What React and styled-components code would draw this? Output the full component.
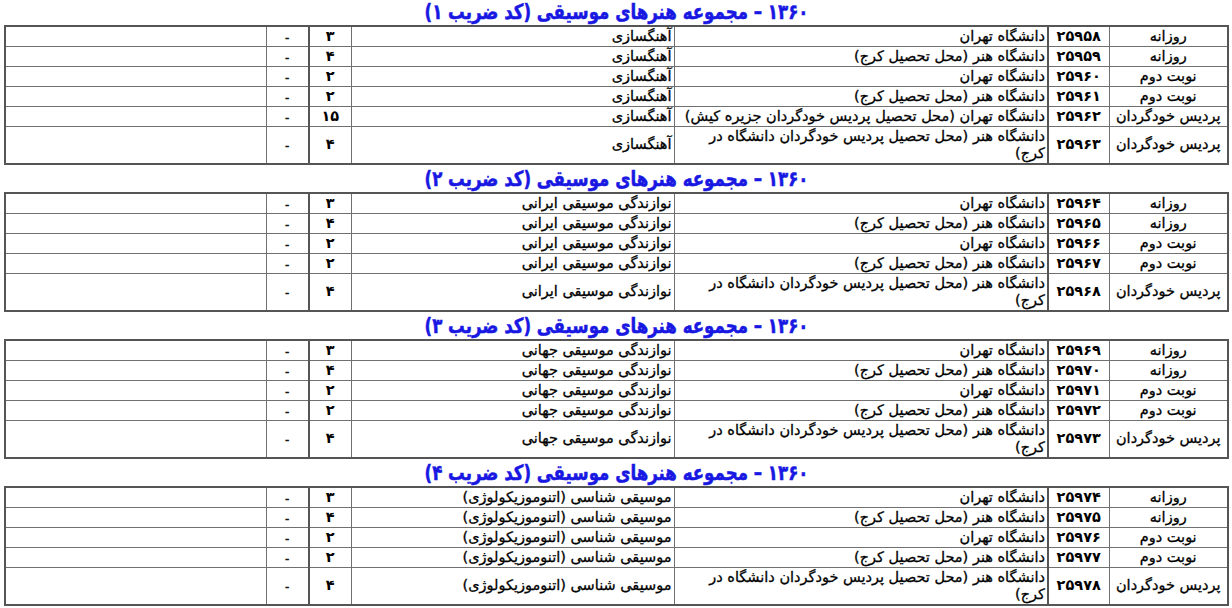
import React from "react";
import styled, { createGlobalStyle } from "styled-components";

const GlobalStyle = createGlobalStyle`
  html, body {
    margin: 0;
    padding: 0;
    background: #ffffff;
  }
  body {
    font-family: "DejaVu Sans", "Noto Sans", sans-serif;
    color: #000;
  }
`;

const Page = styled.div`
  direction: rtl;
  width: 1225px;
  padding: 0 3px 0 4px;
`;

const Heading = styled.h2`
  margin: 0;
  height: ${(p) => (p.$first ? "25px" : "27px")};
  line-height: ${(p) => (p.$first ? "24px" : "28px")};
  text-align: center;
  font-family: "DejaVu Sans Condensed", "DejaVu Sans", sans-serif;
  font-weight: bold;
  font-size: 21px;
  color: #1818e2;
  white-space: nowrap;
  -webkit-text-stroke: 0.5px #1818e2;
  transform: scaleX(0.88);
`;

const Table = styled.table`
  width: 1225px;
  border-collapse: collapse;
  table-layout: fixed;
  border: 2px solid #555;
  font-size: 14.5px;
`;

const Col = styled.col`
  width: ${(p) => (p.$w ? `${p.$w}px` : "auto")};
`;

const Row = styled.tr`
  height: ${(p) => (p.$tall ? "38px" : "20px")};
`;

const Cell = styled.td`
  border: 1px solid #707070;
  padding: 0 2px;
  line-height: 17px;
  white-space: nowrap;
  overflow: hidden;
  vertical-align: middle;
  text-align: ${(p) => p.$align || "right"};
  font-weight: ${(p) => (p.$bold ? "bold" : "normal")};
  -webkit-text-stroke: ${(p) => (p.$bold ? "0" : "0.3px #000")};
  border-left-width: ${(p) => (p.$thickLeft ? "2px" : "1px")};
  border-left-color: ${(p) => (p.$thickLeft ? "#555" : "#707070")};
`;

const UniCell = styled(Cell)`
  white-space: normal;
`;

const Dash = styled(Cell)`
  color: #333;
  font-size: 12px;
  line-height: 13px;
  padding-top: 4px;
`;

const fa = (n) =>
  String(n).replace(/[0-9]/g, (d) => "۰۱۲۳۴۵۶۷۸۹"[d]);

const TEHRAN = "دانشگاه تهران";
const KARAJ = "دانشگاه هنر (محل تحصیل کرج)";

const groups = [
  {
    zarib: 1,
    field: "آهنگسازی",
    start: 25958,
    caps: [3, 4, 2, 2, 15, 4],
    rows: [
      ["روزانه", TEHRAN],
      ["روزانه", KARAJ],
      ["نوبت دوم", TEHRAN],
      ["نوبت دوم", KARAJ],
      ["پردیس خودگردان", "دانشگاه تهران (محل تحصیل پردیس خودگردان جزیره کیش)"],
      ["پردیس خودگردان", null],
    ],
  },
  {
    zarib: 2,
    field: "نوازندگی موسیقی ایرانی",
    start: 25964,
    caps: [3, 4, 2, 2, 4],
    rows: [
      ["روزانه", TEHRAN],
      ["روزانه", KARAJ],
      ["نوبت دوم", TEHRAN],
      ["نوبت دوم", KARAJ],
      ["پردیس خودگردان", null],
    ],
  },
  {
    zarib: 3,
    field: "نوازندگی موسیقی جهانی",
    start: 25969,
    caps: [3, 4, 2, 2, 4],
    rows: [
      ["روزانه", TEHRAN],
      ["روزانه", KARAJ],
      ["نوبت دوم", TEHRAN],
      ["نوبت دوم", KARAJ],
      ["پردیس خودگردان", null],
    ],
  },
  {
    zarib: 4,
    field: "موسیقی شناسی (اتنوموزیکولوژی)",
    start: 25974,
    caps: [3, 4, 2, 2, 4],
    rows: [
      ["روزانه", TEHRAN],
      ["روزانه", KARAJ],
      ["نوبت دوم", TEHRAN],
      ["نوبت دوم", KARAJ],
      ["پردیس خودگردان", null],
    ],
  },
];

// type, code, university, field, capacity, dash, remainder
const COLS = [119, 61, 374, 323, 42, 43, null];

const GroupTable = ({ group }) => (
  <Table>
    <colgroup>
      {COLS.map((w, i) => (
        <Col key={i} $w={w} />
      ))}
    </colgroup>
    <tbody>
      {group.rows.map(([type, uni], i) => {
        const tall = uni === null;
        return (
          <Row key={i} $tall={tall}>
            <Cell $align="center">{type}</Cell>
            <Cell $align="center" $bold $thickLeft>
              {fa(group.start + i)}
            </Cell>
            <UniCell>
              {tall ? (
                <>
                  دانشگاه هنر (محل تحصیل پردیس خودگردان دانشگاه در
                  <br />
                  کرج)
                </>
              ) : (
                uni
              )}
            </UniCell>
            <Cell>{group.field}</Cell>
            <Cell $align="center" $bold $thickLeft>
              {fa(group.caps[i])}
            </Cell>
            <Dash $align="center">-</Dash>
            <Cell />
          </Row>
        );
      })}
    </tbody>
  </Table>
);

const App = () => (
  <>
    <GlobalStyle />
    <Page>
      {groups.map((g, i) => (
        <React.Fragment key={g.zarib}>
          <Heading $first={i === 0}>
            {fa(1360)} – مجموعه هنرهای موسیقی (کد ضریب {fa(g.zarib)})
          </Heading>
          <GroupTable group={g} />
        </React.Fragment>
      ))}
    </Page>
  </>
);

export default App;
